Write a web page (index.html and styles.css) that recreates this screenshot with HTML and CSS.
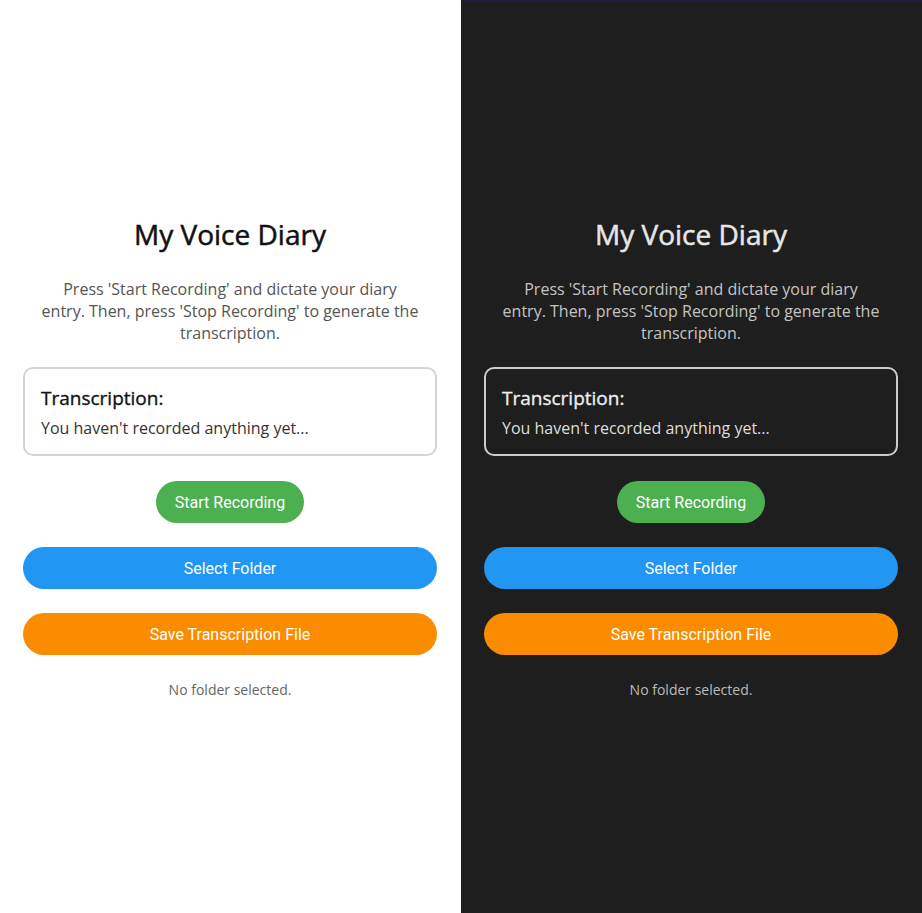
FILE: index.html
```html
<!DOCTYPE html>
<html lang="en">
<head>
<meta charset="utf-8">
<title>My Voice Diary</title>
<link rel="stylesheet" href="styles.css">
</head>
<body>
<div class="split">
  <section class="panel light">
    <h1 class="title">My Voice Diary</h1>
    <p class="desc">Press 'Start Recording' and dictate your diary entry. Then, press 'Stop Recording' to generate the transcription.</p>
    <div class="box">
      <div class="box-label">Transcription:</div>
      <div class="box-text">You haven't recorded anything yet...</div>
    </div>
    <button class="btn btn-green">Start Recording</button>
    <button class="btn btn-blue btn-wide">Select Folder</button>
    <button class="btn btn-orange btn-wide">Save Transcription File</button>
    <p class="status">No folder selected.</p>
  </section>
  <section class="panel dark">
    <h1 class="title">My Voice Diary</h1>
    <p class="desc">Press 'Start Recording' and dictate your diary entry. Then, press 'Stop Recording' to generate the transcription.</p>
    <div class="box">
      <div class="box-label">Transcription:</div>
      <div class="box-text">You haven't recorded anything yet...</div>
    </div>
    <button class="btn btn-green">Start Recording</button>
    <button class="btn btn-blue btn-wide">Select Folder</button>
    <button class="btn btn-orange btn-wide">Save Transcription File</button>
    <p class="status">No folder selected.</p>
  </section>
</div>
</body>
</html>
```
FILE: styles.css
```css
html, body {
  margin: 0;
  padding: 0;
  height: 100%;
}
body {
  font-family: "Open Sans", "Noto Sans", sans-serif;
}
.split {
  display: grid;
  grid-template-columns: 461px 461px;
  height: 913px;
}
.panel {
  display: flex;
  flex-direction: column;
  align-items: center;
  padding: 216px 24px 0 23px;
  box-sizing: border-box;
}
.light {
  background: #ffffff;
}
.dark {
  background: #1e1e1e;
  border-top: 2px solid #221a40;
  padding-top: 214px;
}
.title {
  margin: 0;
  font-size: 28px;
  line-height: 36px;
  font-weight: 400;
  -webkit-text-stroke: 0.5px currentColor;
  color: #111;
}
.desc {
  margin: 26px 0 0;
  font-size: 16px;
  line-height: 22px;
  text-align: center;
  color: #555;
  padding: 0 18px;
}
.box {
  margin-top: 23px;
  width: 100%;
  box-sizing: border-box;
  border: 2px solid #d4d4d4;
  border-radius: 10px;
  padding: 16px 16px 15px;
}
.box-label {
  font-size: 19px;
  line-height: 26px;
  font-weight: 400;
  -webkit-text-stroke: 0.35px currentColor;
  color: #111;
}
.box-text {
  margin-top: 6px;
  font-size: 16px;
  line-height: 22px;
  color: #333;
}
.btn {
  font-family: Roboto, "Noto Sans", sans-serif;
  font-size: 16px;
  color: #fff;
  border: none;
  border-radius: 21px;
  height: 42px;
  padding: 1px 19px 0;
  margin-top: 25px;
  cursor: pointer;
}
.btn-wide {
  width: 100%;
  margin-top: 24px;
}
.btn-green { background: #4caf50; }
.btn-blue { background: #2196f3; }
.btn-orange { background: #fb8c00; }
.status {
  margin: 25px 0 0;
  font-size: 14px;
  line-height: 20px;
  color: #666;
}
.dark .title { color: #e6e6e6; }
.dark .desc { color: #c4c4c4; }
.dark .box { border-color: #cccccc; }
.dark .box-label { color: #eeeeee; }
.dark .box-text { color: #dddddd; }
.dark .status { color: #bbbbbb; }
```
